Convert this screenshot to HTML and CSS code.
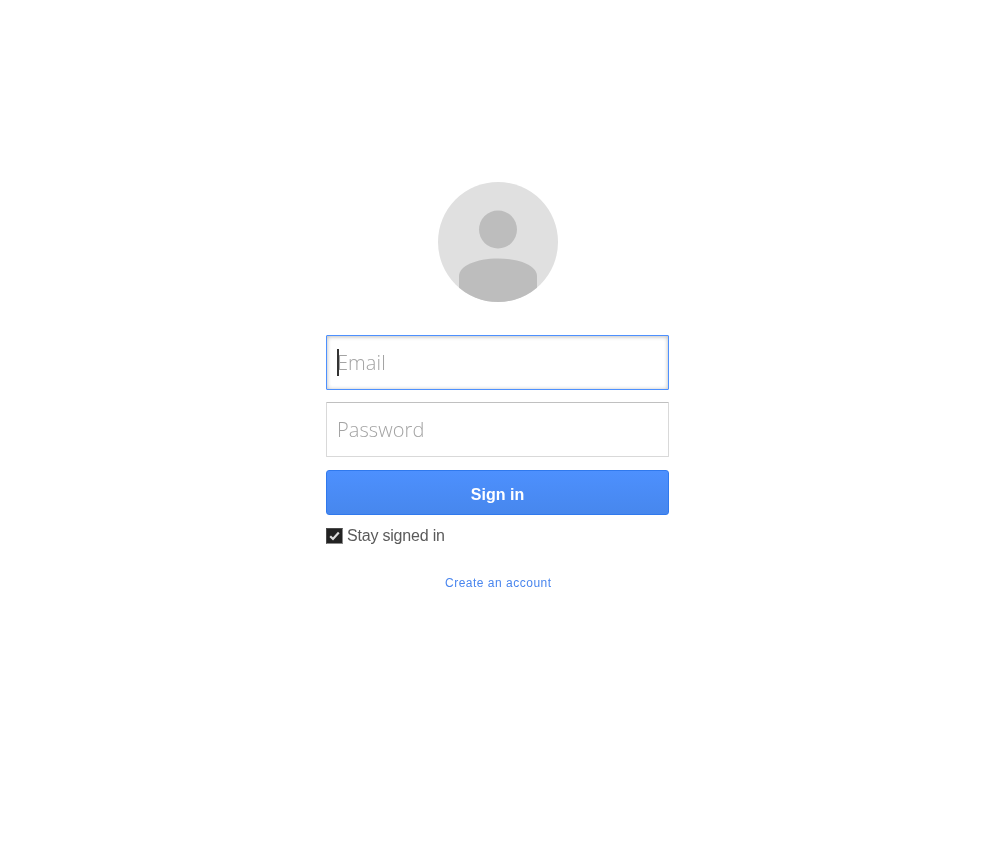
FILE: index.html
```html
<!DOCTYPE html>
<html lang="en">
<head>
<meta charset="utf-8">
<title>Sign in</title>
<link rel="stylesheet" href="styles.css">
</head>
<body>
<main class="card">
  <svg class="avatar" width="120" height="120" viewBox="0 0 120 120" role="img" aria-label="Profile">
    <defs><clipPath id="disc"><circle cx="60" cy="60" r="60"/></clipPath></defs>
    <circle cx="60" cy="60" r="60" fill="#e0e0e0"/>
    <circle cx="60" cy="47.5" r="19" fill="#bdbdbd"/>
    <path clip-path="url(#disc)" d="M21 120V94C21 84 38 76.500 60 76.500S99 84 99 94V120Z" fill="#bdbdbd"/>
  </svg>
  <form class="form">
    <div class="field field-focus"><span class="caret"></span><span class="placeholder">Email</span></div>
    <div class="field"><span class="placeholder">Password</span></div>
    <button class="submit" type="button"><span class="submit-label">Sign in</span></button>
    <label class="stay">
      <span class="check">
        <svg width="11" height="10" viewBox="0 0 11 10"><path d="M1.200 5.200 4 8 9.800 1.500" fill="none" stroke="#dcdcdc" stroke-width="2.200"/></svg>
      </span>
      <span class="stay-label">Stay signed in</span>
    </label>
  </form>
  <a class="create" href="#">Create an account</a>
</main>
</body>
</html>
```
FILE: styles.css
```css
* { box-sizing: border-box; }
html, body { margin: 0; background: #fff; }
body { padding: 182px 0 0 326px; height: 867px; overflow: hidden; font-family: "Liberation Sans", Arial, sans-serif; }
.card { width: 343px; display: flex; flex-direction: column; align-items: center; }
.avatar { display: block; margin-left: 1px; margin-bottom: 33px; }
.form { width: 100%; display: flex; flex-direction: column; }
.field { height: 55px; margin-bottom: 12px; padding-left: 10px; display: flex; align-items: center; position: relative; background: #fff; border: 1px solid #d9d9d9; border-top-color: #c0c0c0; border-radius: 1px; font-family: "Open Sans", sans-serif; font-weight: 300; font-size: 20px; color: #a3a3a3; }
.placeholder { display: block; will-change: transform; letter-spacing: .08px; }
.field-focus { border-color: #4d90fe; box-shadow: inset 0 1px 4px rgba(0,0,0,.18), inset 0 0 4px rgba(0,0,0,.12); }
.caret { position: absolute; left: 10px; top: 13px; width: 2px; height: 27px; background: #333; }
.submit { height: 45px; margin-top: 1px; border: 1px solid #3079ed; border-radius: 3px; background: linear-gradient(#4d90fe, #4787ed); color: #fff; font: bold 16px "Liberation Sans", Arial, sans-serif; padding: 4px 0 0; }
.submit-label { display: block; will-change: transform; }
.stay { display: flex; align-items: center; gap: 4px; margin-top: 13px; height: 16px; font-size: 16px; font-weight: 400; color: #5a5a5a; }
.stay-label { display: block; will-change: transform; letter-spacing: -.2px; }
.check { width: 17px; height: 16px; display: flex; align-items: center; justify-content: center; background: #222; border: 1px solid #4a4a4a; border-right-color: #8a8a8a; border-bottom-color: #8a8a8a; }
.create { margin-top: 32px; margin-left: 1px; font-size: 12px; letter-spacing: .5px; line-height: 14px; color: #4a86ee; text-decoration: none; will-change: transform; }
```
